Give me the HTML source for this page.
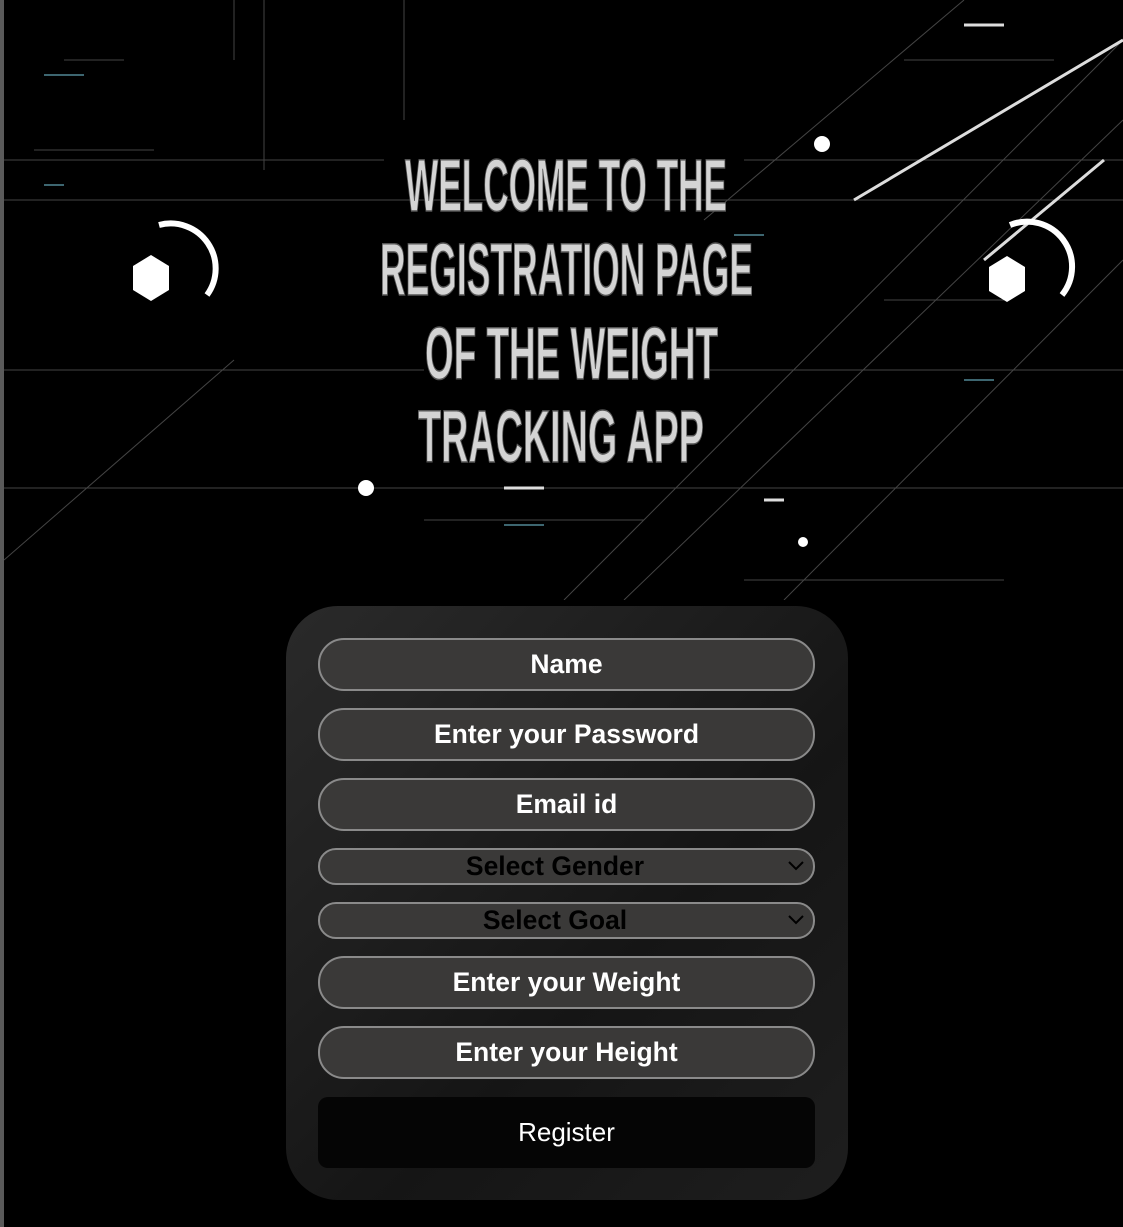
<!DOCTYPE html>
<html><head><style>
html,body{margin:0;padding:0;background:#000;width:1123px;height:1227px;overflow:hidden;font-family:"Liberation Sans",sans-serif}
.lb{position:absolute;left:0;top:0;width:4px;height:1227px;background:#5a5a5a}
.hero{position:absolute;left:4px;top:0;width:1119px;height:600px}
.card{position:absolute;left:286px;top:606px;width:562px;height:594px;border-radius:52px;background:linear-gradient(135deg,#2a2a2a,#151515 60%,#1e1e1e)}
.in{position:absolute;left:32px;width:493px;height:49px;border:2px solid #8a8a8a;border-radius:26px;background:#3a3938;color:#fff;font-weight:bold;font-size:26.5px;text-align:center;line-height:49px}
.sel{position:absolute;left:32px;width:493px;height:33px;border:2px solid #8a8a8a;border-radius:18px;background:#3a3938;color:#000;font-weight:bold;font-size:26.5px;line-height:33px}
.sel span{position:absolute;left:0;width:470px;text-align:center}
.sel svg{position:absolute;right:8px;top:10px}
.btn{position:absolute;left:32px;top:491px;width:497px;height:71px;border-radius:10px;background:#050505;color:#fff;font-size:26px;text-align:center;line-height:70px;overflow:hidden}
</style></head><body>
<div class="lb"></div>
<svg class="hero" width="1119" height="600" viewBox="0 0 1119 600">
<g stroke="#444" stroke-width="1" fill="none">
<path d="M0 200H1119M0 370H420M700 370H1119M0 488H1119M0 160H380M740 160H1119"/>
<path d="M620 600L1119 120M560 600L1119 40M780 600L1119 260M700 220L960 0M0 560L230 360M260 0V170M400 0V120M230 0V60"/>
<path d="M60 60H120M30 150H150M900 60H1050M880 300H1000M740 580H1000M420 520H640"/>
</g>
<g stroke="#6ab" stroke-width="2" opacity=".6"><path d="M40 75h40M500 525h40M960 380h30M730 235h30M40 185h20"/></g>
<g stroke="#ddd" stroke-width="3"><path d="M850 200L1119 40M980 260L1100 160M760 500h20M500 488h40M960 25h40"/></g>
<polygon points="147,255 165,266 165,290 147,301 129,290 129,266" fill="#fff"/>
<path d="M155 225A45 45 0 0 1 203 295" stroke="#fff" stroke-width="6" fill="none"/>
<polygon points="1003,256 1021,267 1021,291 1003,302 985,291 985,267" fill="#fff"/>
<path d="M1006 225A45 45 0 0 1 1058 295" stroke="#fff" stroke-width="6" fill="none"/>
<circle cx="818" cy="144" r="8" fill="#fff"/><circle cx="362" cy="488" r="8" fill="#fff"/><circle cx="799" cy="542" r="5" fill="#fff"/>
<g font-family="Liberation Sans Narrow,Liberation Sans,sans-serif" font-weight="bold" fill="#d4d4d4" stroke="#555" stroke-width="1.5">
<text x="401" y="211" textLength="322" lengthAdjust="spacingAndGlyphs" font-size="74">WELCOME TO THE</text>
<text x="376" y="295" textLength="373" lengthAdjust="spacingAndGlyphs" font-size="74">REGISTRATION PAGE</text>
<text x="421" y="379" textLength="293" lengthAdjust="spacingAndGlyphs" font-size="74">OF THE WEIGHT</text>
<text x="414" y="462" textLength="286" lengthAdjust="spacingAndGlyphs" font-size="74">TRACKING APP</text>
</g>
</svg>
<div class="card">
<div class="in" style="top:32px">Name</div>
<div class="in" style="top:102px">Enter your Password</div>
<div class="in" style="top:172px">Email id</div>
<div class="sel" style="top:242px"><span>Select Gender</span><svg width="18" height="12"><path d="M2 2l7 7 7-7" stroke="#000" stroke-width="2" fill="none"/></svg></div>
<div class="sel" style="top:296px"><span>Select Goal</span><svg width="18" height="12"><path d="M2 2l7 7 7-7" stroke="#000" stroke-width="2" fill="none"/></svg></div>
<div class="in" style="top:350px">Enter your Weight</div>
<div class="in" style="top:420px">Enter your Height</div>
<div class="btn">Register</div>
</div>
</body></html>
